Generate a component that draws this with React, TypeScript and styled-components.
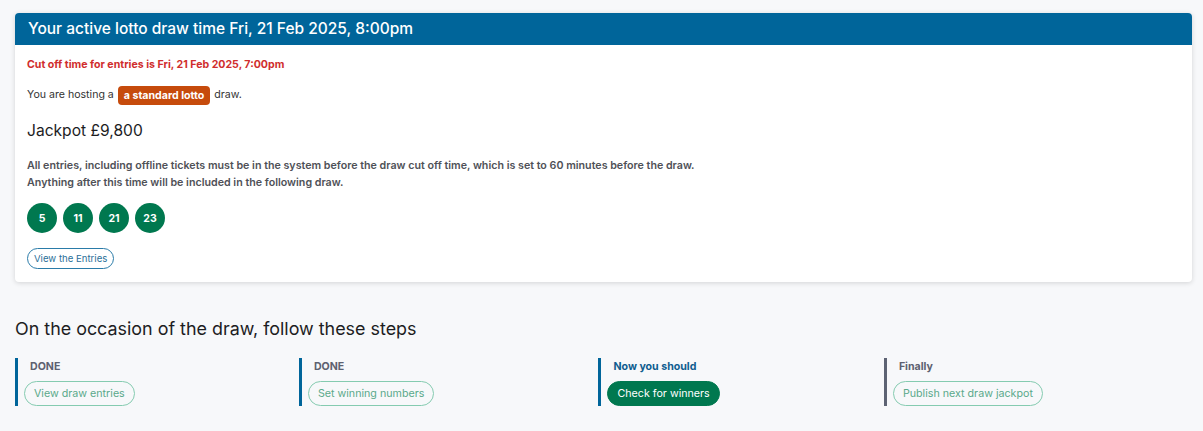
import React from "react";
import styled, { createGlobalStyle } from "styled-components";

const GlobalStyle = createGlobalStyle`
  html, body {
    margin: 0;
    padding: 0;
    background: #f7f8fa;
    font-family: Inter, "Noto Sans", sans-serif;
    color: #222;
    overflow: hidden;
  }
`;

const Page = styled.div`
  padding: 13px 11px 0 15px;
`;

const Card = styled.section`
  background: #fff;
  border-radius: 4px;
  box-shadow: 0 1px 5px rgba(0, 0, 0, 0.15);
  overflow: hidden;
`;

const CardHeader = styled.h2`
  margin: 0;
  background: #00659a;
  color: #fff;
  font-size: 15.5px;
  font-weight: 500;
  height: 32px;
  line-height: 32px;
  padding: 0 13px;
`;

const CardBody = styled.div`
  padding: 12px 12px 13px 12px;
`;

const Cutoff = styled.p`
  margin: 0 0 12px;
  color: #d02d2d;
  font-size: 10.6px;
  font-weight: 700;
  line-height: 16px;
`;

const Hosting = styled.p`
  margin: 0;
  font-size: 10.6px;
  color: #333;
  line-height: 20px;
  display: flex;
  align-items: center;
  gap: 4px;
`;

const Badge = styled.span`
  background: #c64b0c;
  color: #fff;
  font-weight: 700;
  font-size: 10.6px;
  border-radius: 4px;
  padding: 0 6px;
  line-height: 19px;
`;

const Jackpot = styled.h3`
  margin: 14px 0 0;
  font-size: 15.6px;
  font-weight: 400;
  line-height: 24px;
  color: #1d1d1f;
`;

const Notice = styled.p`
  margin: 14px 0 0;
  font-size: 10.7px;
  font-weight: 600;
  line-height: 17px;
  color: #4f5157;
`;

const Balls = styled.div`
  display: flex;
  gap: 6px;
  margin-top: 12px;
`;

const Ball = styled.span`
  width: 30px;
  height: 30px;
  border-radius: 50%;
  background: #00784f;
  color: #fff;
  font-size: 10.5px;
  font-weight: 700;
  display: flex;
  align-items: center;
  justify-content: center;
`;

const OutlineLink = styled.button`
  display: block;
  margin-top: 15px;
  background: #fff;
  border: 1px solid #2a7ba8;
  color: #2a6f99;
  border-radius: 11px;
  font-family: inherit;
  font-size: 9.6px;
  height: 21px;
  padding: 0 6px;
  cursor: pointer;
`;

const StepsTitle = styled.h2`
  margin: 34px 0 0;
  font-size: 17.9px;
  font-weight: 400;
  color: #1d1d1f;
  line-height: 26px;
`;

const Steps = styled.div`
  display: flex;
  margin-top: 16px;
  margin-right: -15px;
`;

const Step = styled.div<{ $tone: "blue" | "grey" }>`
  flex: 1 1 auto;
  border-left: 3px solid ${(p) => (p.$tone === "blue" ? "#00659a" : "#5d6373")};
  padding-left: 6px;
  display: flex;
  flex-direction: column;
  align-items: flex-start;
`;

const StepLabel = styled.span<{ $active?: boolean }>`
  padding-left: 6px;
  font-size: 10.6px;
  font-weight: 700;
  line-height: 16px;
  margin-top: 1px;
  color: ${(p) => (p.$active ? "#0f5d8f" : "#5d6170")};
`;

const StepButton = styled.button<{ $active?: boolean }>`
  margin-top: 6px;
  height: 25px;
  padding: 0 9px;
  border-radius: 13px;
  font-family: inherit;
  font-size: 10.7px;
  cursor: pointer;
  border: 1px solid ${(p) => (p.$active ? "#00784f" : "#85cbb0")};
  background: ${(p) => (p.$active ? "#00784f" : "transparent")};
  color: ${(p) => (p.$active ? "#fff" : "#5aa98a")};
`;

const steps = [
  { label: "DONE", action: "View draw entries", tone: "blue" as const },
  { label: "DONE", action: "Set winning numbers", tone: "blue" as const },
  { label: "Now you should", action: "Check for winners", tone: "blue" as const, active: true },
  { label: "Finally", action: "Publish next draw jackpot", tone: "grey" as const },
];

export default function App() {
  return (
    <>
      <GlobalStyle />
      <Page>
        <Card>
          <CardHeader>Your active lotto draw time Fri, 21 Feb 2025, 8:00pm</CardHeader>
          <CardBody>
            <Cutoff>Cut off time for entries is Fri, 21 Feb 2025, 7:00pm</Cutoff>
            <Hosting>
              You are hosting a <Badge>a standard lotto</Badge> draw.
            </Hosting>
            <Jackpot>Jackpot £9,800</Jackpot>
            <Notice>
              All entries, including offline tickets must be in the system before the draw cut off time, which is set to 60 minutes before the draw.
              <br />
              Anything after this time will be included in the following draw.
            </Notice>
            <Balls>
              {[5, 11, 21, 23].map((n) => (
                <Ball key={n}>{n}</Ball>
              ))}
            </Balls>
            <OutlineLink>View the Entries</OutlineLink>
          </CardBody>
        </Card>
        <StepsTitle>On the occasion of the draw, follow these steps</StepsTitle>
        <Steps>
          {steps.map((s, i) => (
            <Step key={i} $tone={s.tone}>
              <StepLabel $active={s.active}>{s.label}</StepLabel>
              <StepButton $active={s.active}>{s.action}</StepButton>
            </Step>
          ))}
        </Steps>
      </Page>
    </>
  );
}
